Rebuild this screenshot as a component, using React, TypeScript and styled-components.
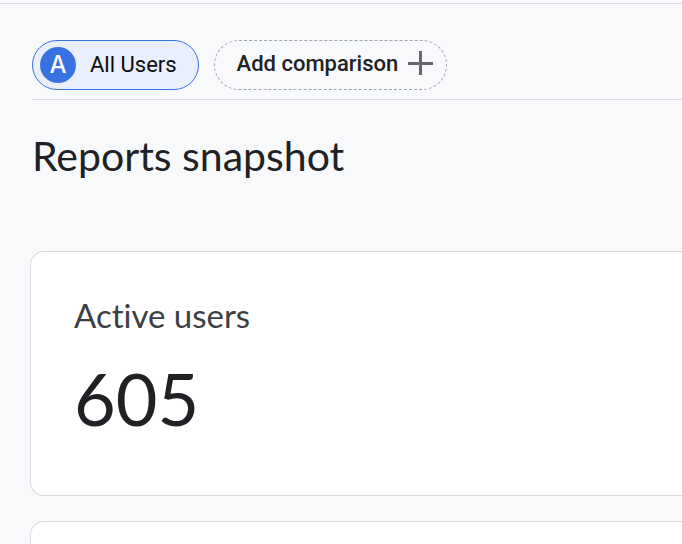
import React from "react";
import styled, { createGlobalStyle } from "styled-components";

const GlobalStyle = createGlobalStyle`
  *, *::before, *::after { box-sizing: border-box; }
  body { margin: 0; background: #f8f9fb; }
`;

const Page = styled.div`
  padding-top: 3px;
  background: #f8f9fb;
  color: #202124;
  font-family: Roboto, sans-serif;
  font-variant-ligatures: none;
`;

const Content = styled.main`
  padding: 36px 0 0 32px;
  border-top: 1px solid #d9dbde;
`;

const Toolbar = styled.div`
  display: flex;
  gap: 15px;
  padding-bottom: 9px;
  border-bottom: 1px solid #d9dbde;
`;

const Chip = styled.button<{ $selected?: boolean }>`
  display: flex;
  align-items: center;
  gap: ${(p) => (p.$selected ? 14 : 9)}px;
  height: 50px;
  padding: ${(p) => (p.$selected ? "0 21px 0 7px" : "0 13px 2px 22px")};
  border: 1px ${(p) => (p.$selected ? "solid #3871e0" : "dashed #a0a3a8")};
  border-radius: 25px;
  background: ${(p) => (p.$selected ? "#e9effd" : "transparent")};
  color: ${(p) => (p.$selected ? "#0b0c0e" : "#202124")};
  font-family: Roboto, sans-serif;
  font-size: 22px;
  font-weight: ${(p) => (p.$selected ? 400 : 500)};
  line-height: 28px;
  white-space: nowrap;
`;

const Avatar = styled.span`
  display: flex;
  align-items: center;
  justify-content: center;
  width: 36px;
  height: 36px;
  border-radius: 50%;
  background: #3871e0;
  color: #fff;
  font-family: Inter, sans-serif;
  font-size: 24px;
  font-weight: 500;
`;

const Title = styled.h1`
  margin: 32px 0 71px;
  font-family: Lato, sans-serif;
  font-size: 41px;
  font-weight: 400;
  line-height: 48px;
`;

const Cards = styled.div`
  display: grid;
  gap: 25px;
  margin-left: -2px;
`;

const Card = styled.section`
  min-height: 245px;
  padding: 43px;
  border: 1px solid #d9dbde;
  border-right: 0;
  border-radius: 14px 0 0 14px;
  background: #fff;
`;

const Label = styled.h2`
  margin: 0;
  color: #3c4043;
  font-family: Lato, sans-serif;
  font-size: 33px;
  font-weight: 400;
  line-height: 40px;
`;

const Value = styled.p`
  margin: 23px 0 0;
  font-family: Lato, sans-serif;
  font-size: 72px;
  font-weight: 400;
  line-height: 80px;
`;

export default function App() {
  return (
    <>
      <GlobalStyle />
      <Page>
        <Content>
          <Toolbar>
            <Chip type="button" $selected>
              <Avatar>A</Avatar>
              All Users
            </Chip>
            <Chip type="button">
              Add comparison
              <svg width="26" height="26" viewBox="0 0 26 26" aria-hidden="true">
                <path d="M13.5 0v24M1 12.5h25" stroke="#66686c" strokeWidth="3" />
              </svg>
            </Chip>
          </Toolbar>
          <Title>Reports snapshot</Title>
          <Cards>
            <Card>
              <Label>Active users</Label>
              <Value>605</Value>
            </Card>
            <Card />
          </Cards>
        </Content>
      </Page>
    </>
  );
}
